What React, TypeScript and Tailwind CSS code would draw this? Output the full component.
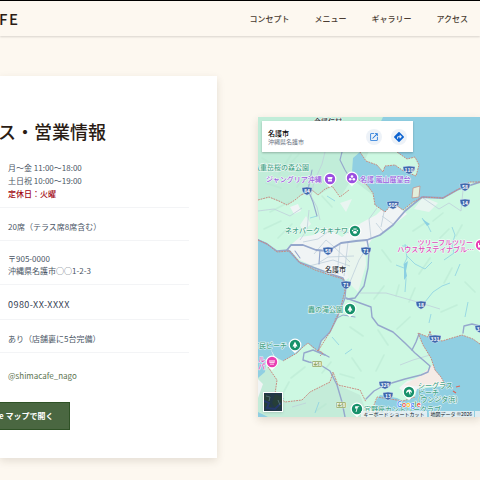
import React from 'react';
import { FaDiamondTurnRight } from 'react-icons/fa6';
import { MdOpenInNew } from 'react-icons/md';

const navItems = [
  { href: '#concept', label: 'コンセプト' },
  { href: '#menu', label: 'メニュー' },
  { href: '#gallery', label: 'ギャラリー' },
  { href: '#access', label: 'アクセス' },
];

const shields = [
  { x: 307, y: 191, label: '84' },
  { x: 328, y: 251, label: '58' },
  { x: 366, y: 251, label: '71' },
  { x: 346, y: 285, label: '71' },
  { x: 409, y: 170, label: '110' },
  { x: 393, y: 205, label: '505' },
  { x: 465, y: 187, label: '58' },
  { x: 465, y: 203, label: '14' },
  { x: 421, y: 305, label: '18' },
  { x: 435, y: 339, label: '331' },
  { x: 481, y: 329, label: '329' },
  { x: 385, y: 385, label: '329' },
  { x: 388, y: 396, label: '13' },
];

function Header() {
  return (
    <header className="relative flex h-9 items-center justify-between border-t border-black bg-[#fdf8f0] pr-3 shadow-[0_1px_2px_rgba(0,0,0,0.15)]">
      <a href="#top" className="-ml-px pt-[2px] text-[15px] font-medium tracking-widest text-[#2a1c14]">
        FE
      </a>
      <nav className="flex gap-[25px]">
        {navItems.map((item) => (
          <a key={item.href} href={item.href} className="text-[8px] font-medium text-[#4a3c32]">
            {item.label}
          </a>
        ))}
      </nav>
    </header>
  );
}

function Row({ children }: { children: React.ReactNode }) {
  return <li className="border-b border-gray-100 pt-3 pb-[7px]">{children}</li>;
}

function InfoCard() {
  return (
    <section className="bg-white pb-7 shadow-[0_3px_8px_rgba(60,50,20,0.13)]">
      <div className="-ml-[2px] pt-[43px]">
        <h2 className="text-[18px] leading-6 font-medium text-[#2a1c14]">ス・営業情報</h2>
        <ul className="mr-7 pt-[6px] text-[8px] leading-[13px] text-gray-600 *:pl-[10px]">
          <Row>
            <p>月〜金 11:00〜18:00</p>
            <p>土日祝 10:00〜19:00</p>
            <p className="font-medium text-red-800">定休日：火曜</p>
          </Row>
          <Row>20席（テラス席8席含む）</Row>
          <Row>
            <address className="leading-3 not-italic">
              〒905-0000
              <br />
              沖縄県名護市○○1-2-3
            </address>
          </Row>
          <Row>
            <p className="text-[9px] leading-[15px] tracking-wider text-gray-700">0980-XX-XXXX</p>
          </Row>
          <Row>あり（店舗裏に5台完備）</Row>
          <li className="pt-4 text-[#5b7350]">
            <a href="#instagram">@shimacafe_nago</a>
          </li>
        </ul>
        <a
          href="#map"
          className="mt-5 inline-block border border-[#2f5226] bg-[#4a6741] py-[7px] pr-4 text-[8px] leading-3 font-bold text-white"
        >
          e マップで開く
        </a>
      </div>
    </section>
  );
}

function Shield({ x, y, label }: { x: number; y: number; label: string }) {
  const w = label.length > 2 ? 6 : 5;
  return (
    <g transform={`translate(${x} ${y})`}>
      <path
        d={`M${-w} -2.4Q${-w} -4 ${-w + 1} -3.5Q0 -4.4 ${w - 1} -3.5Q${w} -4 ${w} -2.4Q${w} 2.4 0 4.2Q${-w} 2.4 ${-w} -2.4Z`}
        fill="#3f68ac"
        stroke="#dce7f8"
        strokeWidth=".5"
      />
      <text y="2" textAnchor="middle" fontSize="5" fontWeight="700" fill="#fff">
        {label}
      </text>
    </g>
  );
}

function Pin({ x, y, color, children }: { x: number; y: number; color: string; children?: React.ReactNode }) {
  return (
    <g transform={`translate(${x} ${y})`}>
      <path d="M-6.4 0A6.4 6.4 0 0 1 6.4 0C6.4 4 2 5.4 0 8.4C-2 5.4 -6.4 4 -6.4 0Z" fill="#fff" />
      <circle r="5.2" fill={color} />
      <g fill="#fff">{children}</g>
    </g>
  );
}

const tree = <path d="M0 -3.4L2.5 1.4H.7V3H-.7V1.4H-2.5Z" />;

const paw = (
  <>
    <ellipse cx="0" cy="1.3" rx="1.9" ry="1.5" />
    <circle cx="-2.4" cy="-.4" r=".8" />
    <circle cx="-.9" cy="-1.9" r=".8" />
    <circle cx=".9" cy="-1.9" r=".8" />
    <circle cx="2.4" cy="-.4" r=".8" />
  </>
);

function MapDrawing() {
  return (
    <svg viewBox="258 117 222 300" className="block h-auto w-full" role="img" aria-label="名護市の地図">
      <rect x="258" y="117" width="222" height="300" fill="#cdf8e2" />
      <path d="M258 117H384L365 160L374 196L352 179L341 196L332 187L318 195L312 190L300 196L287 205L270 198L258 200Z" fill="#c1edd9" />
      <path d="M268 367L277 380L275 394L285 402L302 400L310 392L330 382L333 372L338 385L360 395L366 410V417H258V378Z" fill="#c4ecd9" />

      {/* hill shading */}
      <g fill="none" stroke="#b8e8d2" strokeWidth="1.6" opacity=".5" strokeLinecap="round">
        <path d="M262 158L273 165M291 155L279 174M266 183L281 188M299 154L290 164M302 180L297 187M322 196L332 207" />
        <path d="M270 212L289 202M264 229L281 221M278 238L292 224M382 250L391 262M430 258L419 274M452 268L444 283M462 225L456 236" />
        <path d="M384 286L374 299M399 285L396 296M410 317L397 329M378 330L388 345M384 355L376 371M402 341L413 350M457 305L441 312" />
        <path d="M350 327L363 336M331 362L322 373M352 358L361 371M340 374L354 378M289 382L282 395M305 367L291 378M326 404L316 411" />
        <path d="M425 223L413 231M443 213L433 221M465 282L475 292M440 238L449 229M415 288L409 302" />
      </g>

      {/* built-up areas */}
      <g fill="#f0f4f5">
        <path d="M287 248L300 237L314 235L327 228L342 237L361 223L376 215L391 201L407 214L390 228L372 239L362 255L357 272L346 280L333 274L315 267L300 260Z" />
        <path d="M352 238L345 267L351 285L358 292L366 265L365 242Z" fill="#e9f5ee" />
        <path d="M421 378L433 372L440 376L446 386L420 387L410 397L399 388L407 381Z" />
        <path d="M258 379L263 384L258 398ZM290 207L298 204L301 211L294 214ZM264 356L272 350L280 358L271 363Z" />
        <path d="M306 216L311 224L303 232L300 225ZM423 197L438 203L429 212L414 209ZM340 203L352 199L346 212Z" opacity=".8" />
      </g>
      <path d="M404 385L418 377L433 365L445 384L424 387Z" fill="#f5ebe6" />

      {/* sea */}
      <g fill="#90cfe2">
        <path d="M383 117H480V183L470 182L457 190L443 198L423 197L413 202L403 210L393 203L385 212L375 205L373 193L367 185L360 181L352 172L353 158L360 152L366 161L377 165L383 172L385 166L395 165L402 170L416 176L419 165L415 157L407 159L397 152L386 145L377 130Z" />
        <path d="M258 239L267 243L277 251L290 250L300 262L315 269L333 275L343 278L345 290L344 298L340 310L335 321L330 332L322 340L318 351L313 348L308 343L303 347L297 353L283 361L275 357L270 348L274 357L266 363L265 372L258 378Z" />
        <path d="M418 333L428 337L430 331L432 338L442 341L462 335L473 339L480 344V417H377L375 402L380 395L397 398L403 401L415 397L417 389L446 386L441 377L435 370L431 358L423 345Z" />
        <path d="M258 412L268 417H258Z" />
      </g>
      <path d="M413 188L420 186L419 197L412 198Z" fill="#e3eedb" stroke="#c2938d" strokeWidth=".8" />

      {/* rivers */}
      <g fill="none" stroke="#8bd0e2" strokeWidth=".8">
        <path d="M405 244L407 258L404 264L406 279L405 292M407 256L415 264L425 269L432 262M402 246H408M404 268L396 265M422 218L427 224L431 232" />
        <path d="M425 302L433 292L442 286L450 283M452 227L455 235L452 245L454 253L444 260M460 264L455 276M468 302L465 317" />
        <path d="M327 196L335 201M317 216L310 218M332 337L339 345M352 349L345 354M319 402L315 413M429 323L431 314M275 394L284 399" />
      </g>
      <path d="M404 264L408 261L406 271L407 276L404 280ZM422 219L430 224L427 226Z" fill="#8bd0e2" />

      {/* minor roads */}
      <g fill="none" stroke="#bfcfda" strokeWidth=".8">
        <path d="M258 211L274 209L290 216L302 208M325 152L322 164L314 182L311 196L317 207L320 220M309 210L307 230L300 240" />
        <path d="M303 242L318 239L332 229L350 233M314 254L326 240L333 246L350 262M340 243L338 266M348 242L344 276M320 262L328 257L354 256" />
        <path d="M309 266L333 260L350 266M371 238L369 219L377 208M384 233L376 223M393 224L382 216M360 293L386 293L414 301L440 309" />
        <path d="M423 198L439 209L449 203L461 211L463 190M384 212L381 227M430 355L413 360L400 365M292 407L306 403M366 249L359 260L350 282" />
      </g>

      {/* trunk roads */}
      <g fill="none" stroke="#95a7cc" strokeWidth="1.4" strokeLinejoin="round" strokeLinecap="round">
        <path d="M287 250L291 245L303 245L316 250L328 251L341 243L356 241L367 240L380 235L393 225L405 211L422 197L443 198L457 190L465 187L480 182" strokeWidth="1.8" />
        <path d="M258 240L267 244L277 251L288 250L299 262L315 268L334 275L343 278L346 285L345 298L337 318L330 332L321 341L318 351L329 357" />
        <path d="M367 240L369 251L368 268L364 286L355 298L347 299" />
        <path d="M342 152L340 160L345 170L352 181M320 250L319 264M295 251L300 258M312 170L308 190L313 202L317 216" strokeWidth="1.1" />
        <path d="M346 298L360 303L371 307L372 317L378 325L393 332L405 343L415 353L430 366L428 372L421 375L405 379L385 385L374 391L366 399" />
        <path d="M419 334L416 342L412 350M463 333L464 326L472 324L480 326" />
        <path d="M325 355L313 350L304 353L303 360L309 362L319 364L330 371L337 385L342 402L345 417" />
        <path d="M335 319L343 315L355 317" strokeWidth="1" />
      </g>

      {/* municipal boundary and coast line */}
      <g fill="none" stroke="#c98a7f" strokeWidth="1" strokeDasharray="1.8 .9">
        <path d="M258 200L269 197L279 201L287 205L295 200L301 195L312 190L318 195L325 189L332 186L340 197L349 190" />
        <path d="M360 152L366 161L377 165L383 172L385 166L395 165L402 170L416 176L419 165L415 157L407 159L397 152" />
        <path d="M352 172L360 181L367 185L373 193L375 205L385 212L393 203L403 210L413 202L423 197L443 198L457 190L470 182L480 182" />
        <path d="M258 240L267 244L277 252L290 251L300 263L315 270L333 276L343 279L345 291L340 310L330 332L318 351L308 343L303 347L297 353L283 361" />
        <path d="M268 367L277 380L275 394L285 402L302 400L310 392L330 382L333 372L338 385L360 390L366 402" />
        <path d="M480 344L473 339L462 335L442 341L432 338L430 331L428 337L418 333L423 345L431 358L435 370L441 377L446 386M415 397L403 401L377 397L374 405" />
        <path d="M318 350L323 353L320 356" />
      </g>
      <path d="M456 387L460 386M453 391L456 393" stroke="#d9655a" strokeWidth="1.2" />

      {shields.map((s) => (
        <Shield key={`${s.x}-${s.y}`} {...s} />
      ))}
      {[[317, 364], [341, 405]].map(([x, y]) => (
        <g key={x}>
          <rect x={x - 5} y={y - 3} width="10" height="6" rx="1" fill="#8aa45f" stroke="#eaf2d8" strokeWidth=".5" />
          <text x={x} y={y + 2} textAnchor="middle" fontSize="5" fontWeight="700" fill="#fff">
            E58
          </text>
        </g>
      ))}

      <g fontSize="7" stroke="#fff" strokeWidth="1.2" strokeOpacity=".8" strokeLinejoin="round" paintOrder="stroke" fontWeight="500">
        <g fill="#2f363b">
          <text x="314" y="124">今帰仁村</text>
          <text x="325" y="272">名護市</text>
        </g>
        <g fill="#4aa58a">
          <text x="309" y="170" textAnchor="end">八重岳桜の森公園</text>
          <text x="285" y="233">ネオパークオキナワ</text>
          <text x="308" y="312">轟の滝公園</text>
          <text x="287" y="348" textAnchor="end">市民ビーチ</text>
          <text x="418" y="388">シーグラス</text>
          <text x="418" y="395">ビーチ</text>
          <text x="418" y="402">(ウンジタ浜)</text>
          <text x="364" y="412">宜野座カントリークラブ</text>
        </g>
        <g fill="#9b5ce0">
          <text x="266" y="182">ジャングリア沖縄</text>
          <text x="360" y="182">名護 嵐山展望台</text>
        </g>
        <g fill="#dc4fba">
          <text x="473" y="245" textAnchor="end">ツリーフルツリー</text>
          <text x="474" y="252" textAnchor="end">ハウスサステイナブル…</text>
          <text x="265" y="362" textAnchor="end">ル</text>
          <text x="265" y="369" textAnchor="end">パ</text>
        </g>
      </g>

      <Pin x={330} y={179} color="#9a4fe0">
        <path d="M-2.6 -2H2.6L2 0H-2ZM-2 .6H2V2.6H-2Z" />
      </Pin>
      <Pin x={352} y={178} color="#9a4fe0">
        <circle cy="-1.5" r="1.3" />
        <circle cx="-1.8" cy="1.3" r="1.3" />
        <circle cx="1.8" cy="1.3" r="1.3" />
      </Pin>
      <Pin x={355} y={231} color="#17916b">{paw}</Pin>
      <Pin x={350} y={309} color="#17916b">{tree}</Pin>
      <Pin x={295} y={345} color="#17916b">{tree}</Pin>
      <Pin x={409} y={392} color="#17916b">
        <path d="M-3 1.2Q-2.8 -2.6 .4 -2.6Q2.8 -2.4 3 1L1 -.4L1.6 2.4H.6L-.4 -.4Z" />
      </Pin>
      <Pin x={357} y={409} color="#17916b">
        <path d="M-1.8 -2.8H2.6L.8 -1.4L-.6 3H-1.4L-.4 -.6H-2Z" />
      </Pin>
      <Pin x={272} y={362} color="#e93fb2">
        <path d="M-3 -1.6H3V-.6H-3ZM-2.6 .2H2.6V1H-2.6ZM-2 1.8H2V2.5H-2Z" />
      </Pin>
      <Pin x={481} y={245} color="#e93fb2">
        <path d="M-3 -2H-2V0H3V2.4H-3Z" />
      </Pin>

      <text x="397" y="407" fontSize="7" fontWeight="500" stroke="#fff" strokeWidth="1" paintOrder="stroke">
        <tspan fill="#4285f4">G</tspan>
        <tspan fill="#ea4335">o</tspan>
        <tspan fill="#fbbc05">o</tspan>
        <tspan fill="#4285f4">g</tspan>
        <tspan fill="#34a853">l</tspan>
        <tspan fill="#ea4335">e</tspan>
      </text>
    </svg>
  );
}

function AccessMap() {
  return (
    <section className="relative overflow-hidden shadow-[0_3px_8px_rgba(60,50,20,0.15)]">
      <MapDrawing />
      <div className="absolute top-1 left-1 flex h-[31px] w-[151px] items-center bg-white px-[6px] shadow-[0_1px_2px_rgba(0,0,0,0.25)]">
        <div className="flex-1">
          <p className="text-[7px] leading-[10px] font-medium text-black">名護市</p>
          <p className="text-[6px] leading-2 text-gray-500">沖縄県名護市</p>
        </div>
        <div className="flex gap-[9px]">
          <a href="#open" aria-label="マップで開く" className="flex size-4 items-center justify-center rounded-full bg-[#edf2f8]">
            <MdOpenInNew className="size-[10px] text-[#1a73d8]" />
          </a>
          <a href="#route" aria-label="ルート" className="flex size-4 items-center justify-center rounded-full bg-[#edf2f8]">
            <FaDiamondTurnRight className="size-[10px] text-[#0b62d0]" />
          </a>
        </div>
      </div>
      <button type="button" aria-label="航空写真" className="absolute bottom-[5px] left-[5px] size-5 border border-white bg-[#223848] shadow-sm">
        <svg viewBox="0 0 18 18" className="size-full">
          <path d="M0 1L7 3L5 10L9 16L0 13ZM11 1L18 4V13L12 16L8 10Z" fill="#263e38" />
          <path d="M0 8L5 10L3 15L11 16L17 10" fill="none" stroke="#25386c" strokeWidth="2" />
          <path d="M2 3L6 4L5 8M14 7L16 12" fill="none" stroke="#4f6c71" />
        </svg>
      </button>
      <div className="absolute right-0 bottom-0 flex text-[5px] leading-[6px] whitespace-nowrap text-gray-900">
        <button type="button" className="bg-gray-100/80 px-[2px]">キーボード ショートカット</button>
        <span className="ml-[2px] bg-gray-100/80 px-[2px]">地図データ ©2026</span>
        <span className="ml-px w-[5px] bg-gray-100/80" />
      </div>
    </section>
  );
}

export default function App() {
  return (
    <div
      lang="ja"
      className="min-h-screen overflow-x-hidden bg-[#fdf8f0] font-['Noto_Sans_CJK_JP','Noto_Sans',sans-serif]"
    >
      <Header />
      <main className="grid grid-cols-[217fr_222fr] items-center gap-[41px] pt-10 pb-5">
        <InfoCard />
        <AccessMap />
      </main>
    </div>
  );
}
